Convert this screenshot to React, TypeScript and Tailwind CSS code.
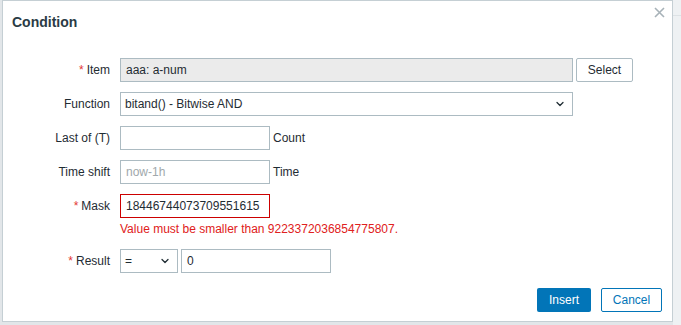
import { ChevronDown } from "lucide-react"

const FIELD = "h-[24px] border border-[#acbbc2] px-[5px] text-[12px] text-[#1f2c33] outline-none"

function Label({ text, required }: { text: string; required?: boolean }) {
  return (
    <div className="mr-[10px] w-[107px] shrink-0 text-right text-[12px] text-[#1f2c33]">
      {required && <span className="mr-[3px] text-[#e33734]">*</span>}
      {text}
    </div>
  )
}

function Select({ value, width }: { value: string; width: string }) {
  return (
    <div className={`${FIELD} ${width} flex items-center justify-between bg-white pl-[4px] pr-[6px]`}>
      <span>{value}</span>
      <ChevronDown size={12} strokeWidth={2.5} className="text-[#1f2c33]" />
    </div>
  )
}

export default function App() {
  return (
    <div className="flex h-[325px] w-[681px] overflow-hidden bg-[#e2e6e9] font-['Liberation_Sans',Arial,sans-serif]">
      <div className="ml-[2px] flex h-[322px] w-[671px] shrink-0 flex-col border border-[#c5cfd4] bg-white">
        <header className="relative h-[57px] shrink-0">
          <h2 className="pl-[9px] pt-[12px] text-[14px] font-bold leading-[18px] text-[#2a3b45]">Condition</h2>
          <button className="absolute right-[7px] top-[6px] text-[#a7b2b8]">
            <svg width="11" height="11" viewBox="0 0 11 11" fill="none" stroke="currentColor" strokeWidth="1.6">
              <path d="M1 1l9 9M10 1l-9 9" />
            </svg>
          </button>
        </header>

        <div className="flex items-center">
          <Label text="Item" required />
          <div className={`${FIELD} flex w-[453px] items-center bg-[#ebebeb]`}>aaa: a-num</div>
          <button className="ml-[3px] h-[24px] w-[57px] rounded-[2px] border border-[#acbbc2] bg-white text-[12px] text-[#1f2c33]">
            Select
          </button>
        </div>

        <div className="mt-[10px] flex items-center">
          <Label text="Function" />
          <Select value="bitand() - Bitwise AND" width="w-[453px]" />
        </div>

        <div className="mt-[10px] flex items-center">
          <Label text="Last of (T)" />
          <div className={`${FIELD} w-[150px] bg-white`} />
          <span className="ml-[3px] text-[12px] text-[#1f2c33]">Count</span>
        </div>

        <div className="mt-[10px] flex items-center">
          <Label text="Time shift" />
          <div className={`${FIELD} flex w-[150px] items-center bg-white text-[#a0a8ac]`}>now-1h</div>
          <span className="ml-[3px] text-[12px] text-[#1f2c33]">Time</span>
        </div>

        <div className="mt-[10px] flex items-center">
          <Label text="Mask" required />
          <div className="flex h-[24px] w-[150px] items-center border border-[#cc0000] bg-white px-[5px] text-[12px] text-[#1f2c33]">
            18446744073709551615
          </div>
        </div>
        <div className="ml-[117px] mt-[4px] text-[12px] leading-[14px] text-[#e02020]">
          Value must be smaller than 9223372036854775807.
        </div>

        <div className="mt-[13px] flex items-center">
          <Label text="Result" required />
          <Select value="=" width="w-[58px]" />
          <div className={`${FIELD} ml-[3px] flex w-[150px] items-center bg-white`}>0</div>
        </div>

        <footer className="mt-auto flex justify-end gap-[10px] pb-[9px] pr-[10px]">
          <button className="h-[24px] w-[54px] rounded-[2px] bg-[#0275b8] text-[12px] text-white">Insert</button>
          <button className="h-[24px] w-[61px] rounded-[2px] border border-[#0275b8] bg-white text-[12px] text-[#0275b8]">
            Cancel
          </button>
        </footer>
      </div>
      <div className="flex-1 bg-[#eef1f3]">
        <div className="h-[16px] border-b border-[#dde2e5]" />
      </div>
    </div>
  )
}
